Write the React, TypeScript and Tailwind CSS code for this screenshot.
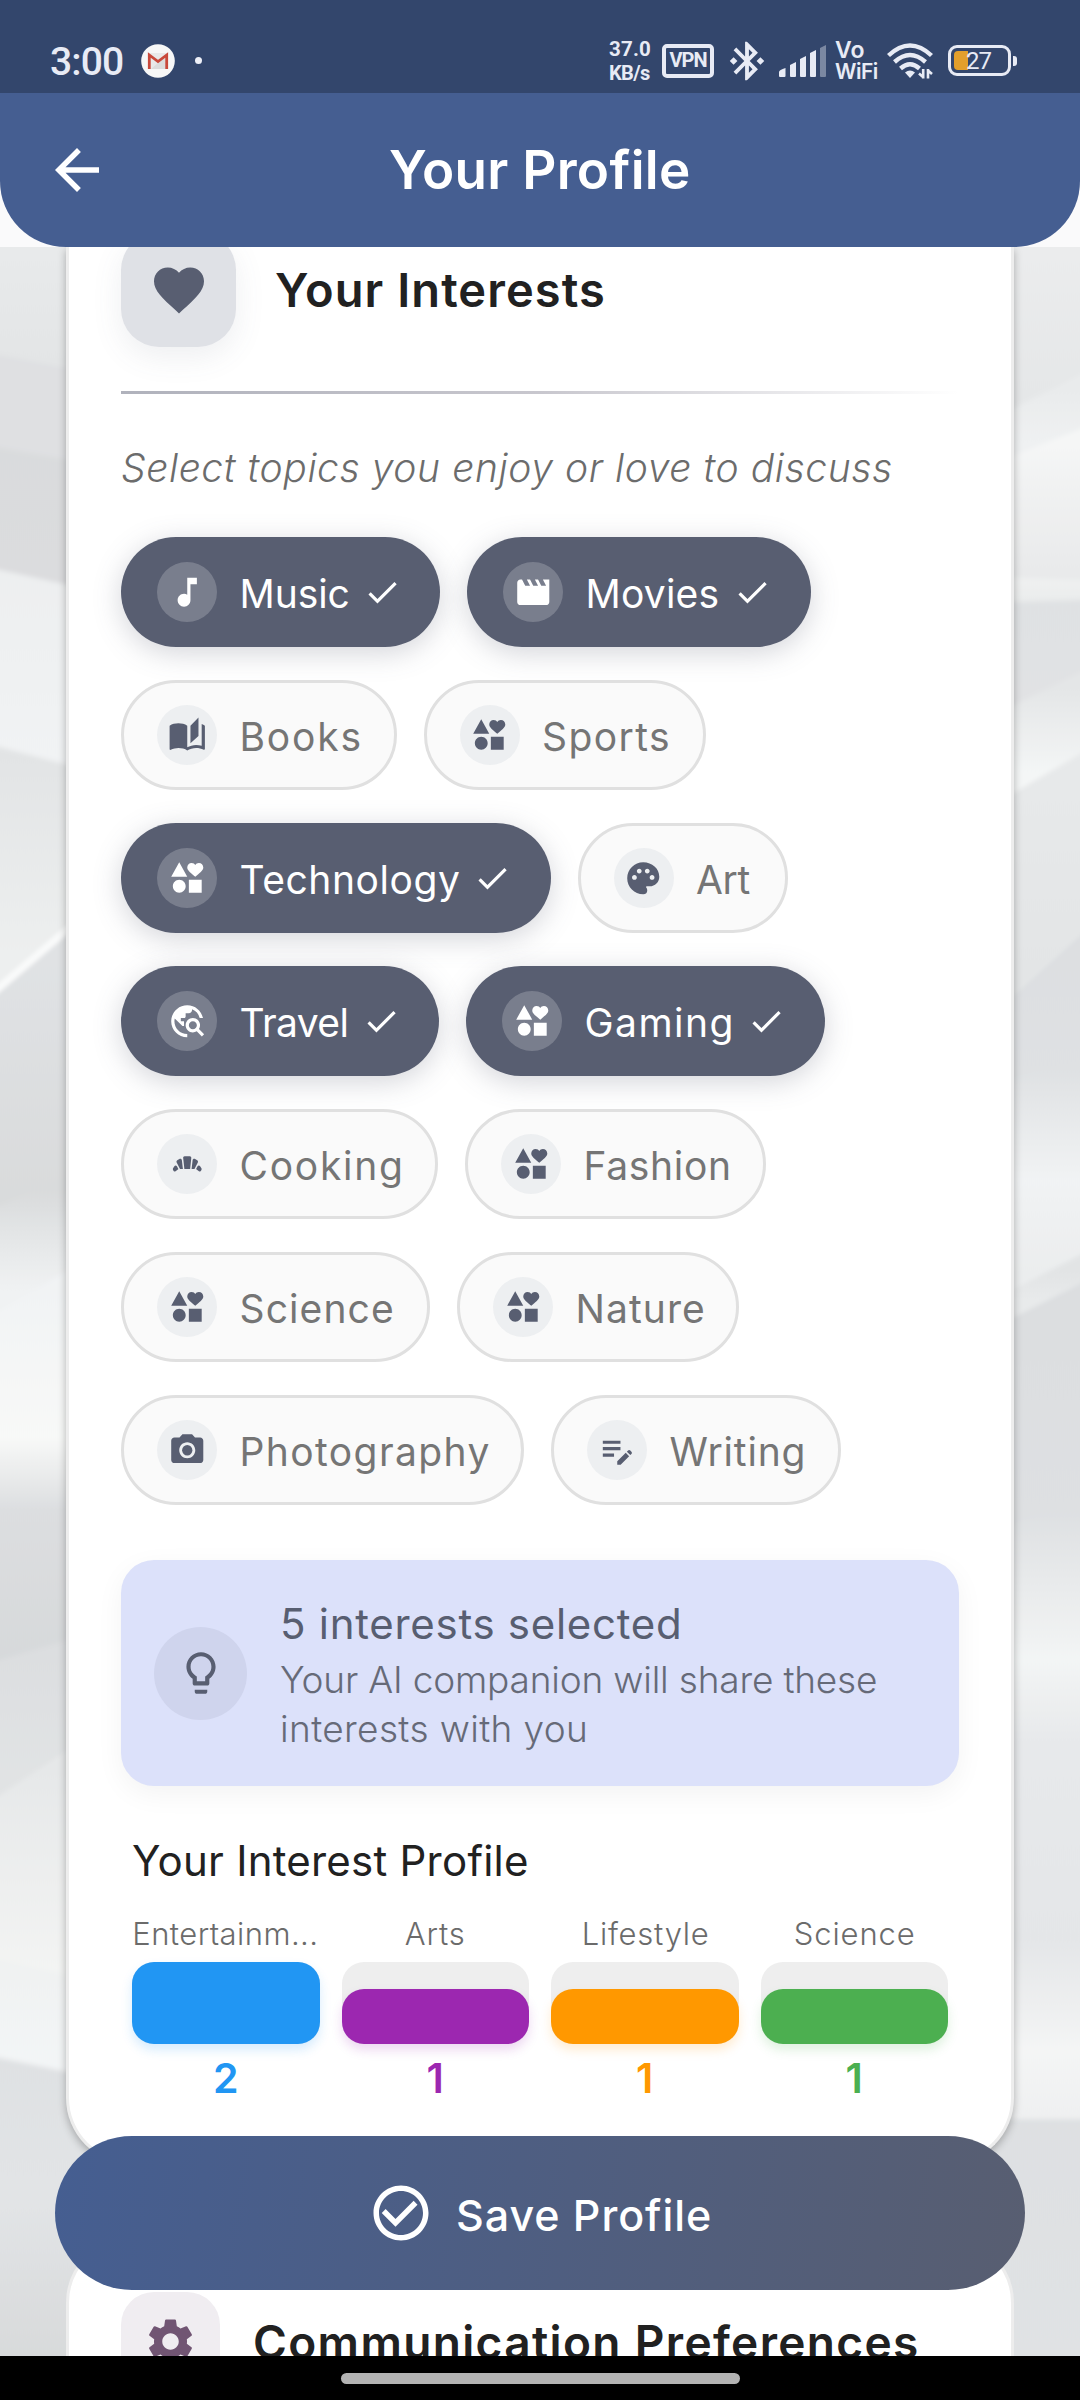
import React, { useLayoutEffect, useRef, useState } from 'react';
import {
  MdArrowBack,
  MdAutoStories,
  MdBakeryDining,
  MdBluetoothConnected,
  MdCameraAlt,
  MdCheck,
  MdCheckCircleOutline,
  MdEditNote,
  MdFavorite,
  MdInterests,
  MdLightbulbOutline,
  MdMovie,
  MdMusicNote,
  MdPalette,
  MdSettings,
  MdTravelExplore,
} from 'react-icons/md';

type IconType = React.ComponentType<{ className?: string }>;

/** Single line of text whose tracking is adjusted so that it spans `width` pixels. */
function FitText({ text, width, className }: { text: string; width: number; className?: string }) {
  const ref = useRef<HTMLSpanElement>(null);
  const [letterSpacing, setLetterSpacing] = useState(0);
  useLayoutEffect(() => {
    const el = ref.current;
    const ctx = document.createElement('canvas').getContext('2d');
    if (!el || !ctx) return;
    const cs = getComputedStyle(el);
    ctx.font = `${cs.fontStyle} ${cs.fontWeight} ${cs.fontSize} ${cs.fontFamily}`;
    const m = ctx.measureText(text);
    const ink = m.actualBoundingBoxLeft + m.actualBoundingBoxRight;
    setLetterSpacing((width - ink) / Math.max(1, text.length - 1));
  }, [text, width]);
  return (
    <span className="block shrink-0 whitespace-nowrap" style={{ width }}>
      <span ref={ref} className={`inline-block ${className ?? ''}`} style={{ letterSpacing }}>
        {text}
      </span>
    </span>
  );
}

/** Edge heights are given as [left, right]; each fold fades from one grey to the next. */
type Fold = [number, number, string, string];

const leftFolds: Fold[] = [
  [247, 247, '#e8eaeb', '#e3e5e6'],
  [355, 368, '#dfe0e2', '#dfe0e2'],
  [448, 460, '#d9dbdd', '#dbdcde'],
  [570, 585, '#edeff0', '#f1f3f4'],
  [747, 765, '#e2e4e5', '#edefef'],
  [982, 924, '#f9fafa', '#f9fafa'],
  [992, 934, '#e0e2e4', '#d9dbdc'],
  [1206, 1176, '#d9dbdc', '#f0f2f3'],
  [1310, 1270, '#f1f3f4', '#f8f9f8'],
  [1440, 1440, '#f7f8f7', '#dcdee0'],
  [1510, 1510, '#dcdee0', '#d7d9db'],
  [1660, 1640, '#dcdee0', '#e1e3e4'],
  [1795, 1750, '#e6e8e9', '#f3f4f3'],
  [1960, 1975, '#f0f2f2', '#f3f5f6'],
  [2058, 2072, '#dfe1e3', '#e2e4e6'],
  [2200, 2200, '#e2e4e6', '#d8dadb'],
];

const rightFolds: Fold[] = [
  [247, 247, '#ebeced', '#e5e7e8'],
  [409, 375, '#e9ebec', '#eff1f2'],
  [456, 429, '#f5f6f6', '#e8e9ea'],
  [578, 580, '#eff1f1', '#eaecec'],
  [602, 600, '#dfe1e3', '#e1e2e4'],
  [706, 673, '#e4e6e7', '#f4f6f6'],
  [794, 754, '#e7e9ea', '#e3e5e6'],
  [997, 936, '#dddfe1', '#dfe1e3'],
  [1080, 1060, '#dfe1e3', '#f1f3f4'],
  [1180, 1180, '#f1f3f4', '#ebedee'],
  [1290, 1255, '#e2e4e5', '#e8eaeb'],
  [1318, 1284, '#dcdee0', '#dee0e2'],
  [1524, 1500, '#dee0e2', '#f3f5f5'],
  [1660, 1660, '#f3f5f5', '#e7e9eb'],
  [1740, 1740, '#e7e9eb', '#e4e6e8'],
  [1940, 1940, '#e4e6e8', '#f4f5f5'],
  [2050, 2050, '#f4f5f5', '#eff0f1'],
  [2119, 2119, '#dee0e2', '#e0e2e4'],
];

/** Silk backdrop along one screen edge; `x` is where the drawn strip starts relative to its folds. */
function SilkStrip({ folds, id, x, className }: { folds: Fold[]; id: string; x: number; className: string }) {
  return (
    <svg viewBox={`${x} 247 100 2109`} preserveAspectRatio="none" className={className}>
      <filter id={`${id}soft`} x="-20%" y="-2%" width="140%" height="104%">
        <feGaussianBlur stdDeviation="0 2.5" />
      </filter>
      <g filter={`url(#${id}soft)`}>
        {folds.map(([l, r, from, to], i) => {
          const next = folds[i + 1];
          const end = next ? (next[0] + next[1]) / 2 : 2356;
          const top = i === 0 ? 200 : undefined;
          return (
            <g key={i}>
              <linearGradient id={`${id}${i}`} gradientUnits="userSpaceOnUse" x1="0" x2="0" y1={(l + r) / 2} y2={end}>
                <stop offset="0" stopColor={from} />
                <stop offset="1" stopColor={to} />
              </linearGradient>
              <path d={`M-40 ${top ?? l}H0L68 ${top ?? r}H110V2400H-40Z`} fill={`url(#${id}${i})`} />
            </g>
          );
        })}
      </g>
    </svg>
  );
}

function GmailIcon() {
  return (
    <svg viewBox="0 0 34 34" className="ml-[19px] size-[34px]">
      <circle cx="17" cy="17" r="16.8" fill="#f7f7f7" />
      <path d="M7 9h20v16H7z" fill="#e9e9e9" />
      <path d="M10 25l7-6 8-8v14z" fill="#dcdcdc" />
      <path d="M8.3 25V11l8.700 6.500 8.700-6.500v14" fill="none" stroke="#c9493b" strokeWidth="2.800" />
    </svg>
  );
}

function SignalIcon() {
  return (
    <svg viewBox="0 0 48 32" className="ml-[9px] h-8 w-12 shrink-0" fill="#e8ebf5">
      <path d="M0 31v-4q0-2 6.500-4v8q0 1-1 1H1q-1 0-1-1z" />
      <path d="M11 31V20l6-3v14q0 1-1 1h-4q-1 0-1-1z" />
      <path d="M21 31V14l6-3v20q0 1-1 1h-4q-1 0-1-1z" />
      <path d="M31 31V8l6-3v26q0 1-1 1h-4q-1 0-1-1z" />
      <path d="M41 31V3l6-3v31q0 1-1 1h-4q-1 0-1-1z" opacity=".4" />
    </svg>
  );
}

function WifiIcon() {
  return (
    <svg viewBox="0 0 46 36" className="ml-2.5 h-9 w-[46px] shrink-0" fill="none" stroke="#e8ebf5" strokeWidth="4.400">
      <path d="M1.500 12.500Q23-7.500 44.500 12.500M7.500 19Q23 5 38.500 19M13.500 25.500Q23 17 32.500 25.500" />
      <path d="M23 35l-5-5.500q5-4 10 0z" fill="#e8ebf5" stroke="none" />
      <path d="M36.200 26v9.500M41 26v9.500M36 34l-4-3.500M41 27.500l4 3.500" strokeWidth="2.600" />
    </svg>
  );
}

function StatusBar() {
  return (
    <div className="flex h-[93px] items-center bg-[#33466c] pt-7 pl-[50px] font-['Roboto'] text-[#e8ebf5]">
      <div className="pt-[3px]">
        <FitText text="3:00" width={72} className="text-[39px] leading-[46px] font-medium" />
      </div>
      <GmailIcon />
      <div className="ml-5 size-[7px] rounded-full bg-[#eef0f8]" />
      <div className="ml-[407px] flex flex-col pt-1 font-bold">
        <FitText text="37.0" width={41} className="text-[20.500px] leading-[19px]" />
        <FitText text="KB/s" width={40} className="text-[20px] leading-[19px]" />
      </div>
      <div className="ml-3 flex h-[34px] w-[52px] shrink-0 items-center justify-center rounded-[5px] border-4 border-[#e8ebf5] font-bold">
        <FitText text="VPN" width={37} className="text-[20px] leading-6" />
      </div>
      <MdBluetoothConnected className="ml-2.5 size-[46px] shrink-0" />
      <SignalIcon />
      <div className="ml-2 flex flex-col font-['Inter'] font-semibold">
        <span className="block h-[22px] text-[23px] leading-[22px]">Vo</span>
        <span className="block h-[22px] w-[42px] text-[21px] leading-[22px] tracking-[-0.5px]">WiFi</span>
      </div>
      <WifiIcon />
      <div className="relative ml-[15px] h-[31px] w-[63px] shrink-0 rounded-[9px] border-[3px] border-[#e8ebf5] p-[3px]">
        <div className="h-full w-3.5 rounded-l-[4px] bg-[#e29f2c]" />
        <span className="absolute top-0 left-[15px] text-[24px] leading-[26px] tracking-[-1px]">27</span>
      </div>
      <div className="ml-0.5 h-2.5 w-1 rounded-r-[3px] bg-[#e8ebf5]" />
    </div>
  );
}

function AppBar() {
  return (
    <div className="bg-[#fafafb]">
      <header className="flex h-[154px] items-center rounded-b-[66px] bg-[#455e91] pl-11 text-white">
        <MdArrowBack className="size-[66px]" />
        <div className="ml-[279px]">
          <FitText text="Your Profile" width={299} className="text-[53px] leading-[64px] font-semibold" />
        </div>
      </header>
    </div>
  );
}

type Interest = { label: string; icon: IconType; width: number; text: number; selected?: boolean };

const rows: Interest[][] = [
  [
    { label: 'Music', icon: MdMusicNote, width: 319, text: 106, selected: true },
    { label: 'Movies', icon: MdMovie, width: 343.500, text: 129, selected: true },
  ],
  [
    { label: 'Books', icon: MdAutoStories, width: 275.500, text: 117 },
    { label: 'Sports', icon: MdInterests, width: 282, text: 124 },
  ],
  [
    { label: 'Technology', icon: MdInterests, width: 429.500, text: 218.500, selected: true },
    { label: 'Art', icon: MdPalette, width: 210.500, text: 53.500 },
  ],
  [
    { label: 'Travel', icon: MdTravelExplore, width: 318, text: 106, selected: true },
    { label: 'Gaming', icon: MdInterests, width: 358.500, text: 144, selected: true },
  ],
  [
    { label: 'Cooking', icon: MdBakeryDining, width: 317, text: 158.500 },
    { label: 'Fashion', icon: MdInterests, width: 300.500, text: 142.500 },
  ],
  [
    { label: 'Science', icon: MdInterests, width: 309, text: 150.500 },
    { label: 'Nature', icon: MdInterests, width: 282, text: 124.500 },
  ],
  [
    { label: 'Photography', icon: MdCameraAlt, width: 403, text: 246 },
    { label: 'Writing', icon: MdEditNote, width: 290, text: 133 },
  ],
];

function Chip({ label, icon: Icon, width, text, selected }: Interest) {
  return (
    <button
      className={
        selected
          ? 'flex h-[110px] shrink-0 items-center rounded-full bg-[#585e71] pr-[39px] pl-9 text-white shadow-[0_6px_28px_rgba(88,94,113,0.26)]'
          : 'flex h-[110px] shrink-0 items-center rounded-full border-[3px] border-[#e0e0e0] bg-[#fafafa] pl-[33px] text-[#757575]'
      }
      style={{ width }}
    >
      <span
        className={
          selected
            ? 'flex size-[60px] shrink-0 items-center justify-center rounded-full bg-white/20'
            : 'flex size-[60px] shrink-0 items-center justify-center rounded-full bg-[#edeff1] text-[#585e71]'
        }
      >
        <Icon className="size-[38.500px]" />
      </span>
      <span className="ml-[22.500px] pt-[3px] text-left">
        <FitText text={label} width={text} className="text-[39px] leading-[50px]" />
      </span>
      {selected && <MdCheck className="ml-auto size-[38.500px] shrink-0" />}
    </button>
  );
}

const categories = [
  { label: 'Entertainm...', text: 181, pos: '-ml-1.5', value: 2, fill: 'h-full bg-[#2196f3] shadow-[0_6px_11px_rgba(33,150,243,0.18)]', color: 'text-[#2196f3]' },
  { label: 'Arts', text: 59, pos: '-ml-0.5', value: 1, fill: 'h-[55px] bg-[#9c27b0] shadow-[0_6px_11px_rgba(156,39,176,0.18)]', color: 'text-[#9c27b0]' },
  { label: 'Lifestyle', text: 124, pos: '-ml-0.5', value: 1, fill: 'h-[55px] bg-[#ff9800] shadow-[0_6px_11px_rgba(255,152,0,0.18)]', color: 'text-[#ff9800]' },
  { label: 'Science', text: 119, pos: '-ml-0.5', value: 1, fill: 'h-[55px] bg-[#4caf50] shadow-[0_6px_11px_rgba(76,175,80,0.18)]', color: 'text-[#4caf50]' },
];

function InterestProfile() {
  return (
    <section className="mt-[50px] px-[11px]">
      <h3>
        <FitText text="Your Interest Profile" width={394} className="text-[42px] leading-[50px] text-[#212121]" />
      </h3>
      <div className="mt-7 grid grid-cols-4 gap-[22px]">
        {categories.map((c) => (
          <div key={c.label} className="flex flex-col items-center">
            <div className={c.pos}>
              <FitText text={c.label} width={c.text} className="text-[31px] leading-10 font-light text-[#6b6b6b]" />
            </div>
            <div className="mt-2 flex h-[82px] w-full items-end rounded-[22px] bg-[#eeeeee]">
              <div className={`w-full rounded-[22px] ${c.fill}`} />
            </div>
            <div className={`mt-[9px] text-[41px] leading-[50px] font-semibold ${c.color}`}>{c.value}</div>
          </div>
        ))}
      </div>
    </section>
  );
}

function InterestsCard() {
  return (
    <section className="h-[1917px] rounded-b-[66px] border-x-[3px] border-b-[3px] border-[#ededed] bg-white px-[52px] shadow-[0_3px_9px_rgba(0,0,0,0.28)]">
      <div className="flex h-[100px]">
        <div className="-mt-[15px] flex size-[115px] items-center justify-center rounded-[38px] bg-[#dfe1e6] shadow-[0_10px_30px_rgba(88,94,113,0.10)]">
          <MdFavorite className="size-[60px] text-[#585e71]" />
        </div>
        <h2 className="mt-[13px] ml-[39px]">
          <FitText text="Your Interests" width={327} className="text-[47px] leading-[60px] font-semibold text-[#212121]" />
        </h2>
      </div>
      <div className="mt-11 h-[3px] bg-linear-to-r from-[#b0b2bc] via-[#c8c7ce] to-transparent" />
      <p className="mt-12 pt-px">
        <FitText
          text="Select topics you enjoy or love to discuss"
          width={769}
          className="text-[39px] leading-[49px] font-[350] text-[#6c6c6c] italic"
        />
      </p>
      <div className="mt-[45px] flex flex-col gap-[33px]">
        {rows.map((row) => (
          <div key={row[0].label} className="flex gap-[27px]">
            {row.map((i) => (
              <Chip key={i.label} {...i} />
            ))}
          </div>
        ))}
      </div>
      <div className="mt-[55px] flex h-[226px] items-center rounded-[33px] bg-[#dce1fa] pl-[33px] shadow-[0_8px_28px_rgba(0,0,0,0.05)]">
        <div className="flex size-[93px] shrink-0 items-center justify-center rounded-full bg-[#cfd4ed]">
          <MdLightbulbOutline className="size-[50px] text-[#585e71]" />
        </div>
        <div className="ml-[33px] pt-[3px]">
          <div className="mb-1">
            <FitText text="5 interests selected" width={396} className="text-[42px] leading-[54px] text-[#585e71]" />
          </div>
          <FitText text="Your AI companion will share these" width={595} className="text-[37px] leading-[49px] font-[350] text-[#666a78]" />
          <FitText text="interests with you" width={303} className="text-[37px] leading-[49px] font-[350] text-[#666a78]" />
        </div>
      </div>
      <InterestProfile />
    </section>
  );
}

function CommunicationCard() {
  return (
    <section className="mt-[73px] h-[400px] rounded-t-[66px] border-[3px] border-[#ededed] bg-white px-[52px] pt-[52px]">
      <div className="flex">
        <div className="flex size-[99px] items-center justify-center rounded-[33px] bg-[#f0edf1]">
          <MdSettings className="size-[55px] text-[#715573]" />
        </div>
        <h2 className="mt-5 ml-[33px]">
          <FitText
            text="Communication Preferences"
            width={662}
            className="text-[46px] leading-[60px] font-semibold text-[#212121]"
          />
        </h2>
      </div>
    </section>
  );
}

export default function App() {
  return (
    <div className="flex h-[2400px] w-[1080px] flex-col overflow-hidden font-['Inter',sans-serif]">
      <StatusBar />
      <AppBar />
      <main className="relative h-[2109px] overflow-hidden bg-[#e4e6e7]">
        <SilkStrip folds={leftFolds} id="l" x={0} className="absolute top-0 left-0 h-full w-[100px]" />
        <SilkStrip folds={rightFolds} id="r" x={-32} className="absolute top-0 right-0 h-full w-[100px]" />
        <div className="relative px-[66px]">
          <InterestsCard />
          <CommunicationCard />
        </div>
        <button className="absolute top-[1889px] left-[55px] flex h-[154px] w-[970px] items-center rounded-full bg-linear-[99deg] from-[#455e91] to-[#585e71] pl-[313px] text-white">
          <MdCheckCircleOutline className="size-[66px]" />
          <span className="ml-[22px] pt-1">
            <FitText text="Save Profile" width={252} className="text-[43px] leading-[54px] font-medium" />
          </span>
        </button>
      </main>
      <nav className="flex h-11 justify-center bg-black pt-[17px]">
        <div className="h-[11px] w-[399px] rounded-full bg-[#b3b3b3]" />
      </nav>
    </div>
  );
}
